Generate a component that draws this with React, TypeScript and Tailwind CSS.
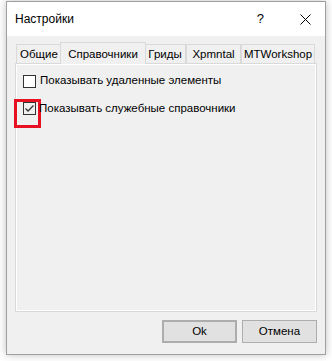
import React from "react";

const font = { fontFamily: '"Liberation Sans", Arial, sans-serif' };

function Tab({ label, active, w }: { label: string; active?: boolean; w: string }) {
  if (active) {
    return (
      <div className={`relative z-10 -mb-px -mr-[2px] -ml-[2px] flex h-[22px] items-start justify-center self-end border border-b-0 border-[#d9d9d9] bg-[#f0f0f0] pt-[3px] ${w}`}>
        <span>{label}</span>
      </div>
    );
  }
  return (
    <div className={`flex h-[19px] items-center justify-center border border-b-0 border-[#d9d9d9] bg-[#f0f0f0] pt-[1px] ${w}`}>
      <span>{label}</span>
    </div>
  );
}

export default function App() {
  return (
    <div className="h-[361px] w-[332px] bg-white text-[11.5px] text-black" style={font}>
      <div className="ml-[6px] pt-px">
        <div className="flex h-[354px] w-[320px] flex-col border border-[#a0a0a0] bg-[#f0f0f0] shadow-[0_0_8px_rgba(0,0,0,0.25)]">
          <div className="flex h-[34px] items-center bg-white">
            <span className="ml-[8px] text-[12px]">Настройки</span>
            <span className="ml-auto mr-[36px] text-[13px]">?</span>
            <svg className="mr-[14px]" width="11" height="11" viewBox="0 0 11 11">
              <path d="M0.5 0.5 L10.5 10.5 M10.5 0.5 L0.5 10.5" stroke="#000" strokeWidth="1" />
            </svg>
          </div>
          <div className="flex flex-1 flex-col px-[8px] pt-[8px]">
            <div className="flex h-[19px] items-end pl-[1px]">
              <Tab label="Общие" w="w-[46px]" />
              <Tab label="Справочники" w="w-[86px]" active />
              <Tab label="Гриды" w="w-[42px]" />
              <Tab label="Xpmntal" w="w-[55px]" />
              <Tab label="MTWorkshop" w="w-[74px]" />
            </div>
            <div className="h-[249px] border border-[#d9d9d9] bg-[#f0f0f0]">
              <div className="h-full border border-white px-[6px] pt-[9px]">
                <div className="flex h-[14px] items-center">
                  <div className="h-[13px] w-[13px] border border-[#333333] bg-white" />
                  <span className="ml-[4px]">Показывать удаленные элементы</span>
                </div>
                <div className="mt-[11px] flex items-start">
                  <div className="-ml-[9px] h-[29px] w-[27px] border-[3px] border-[#e81123] pl-[6px]">
                    <div className="flex h-[13px] w-[13px] items-center justify-center border border-[#333333] bg-[#f0f0f0]">
                      <svg width="11" height="11" viewBox="0 0 11 11">
                        <path d="M1.5 5.5 L4 8 L9.5 2.5" fill="none" stroke="#333" strokeWidth="1.3" />
                      </svg>
                    </div>
                  </div>
                  <span className="-ml-[2px] mt-[2px] leading-[14px]">Показывать служебные справочники</span>
                </div>
              </div>
            </div>
            <div className="mt-[8px] flex justify-end gap-[5px]">
              <button className="h-[23px] w-[75px] border-2 border-[#adadad] bg-[#e1e1e1] text-[11.5px]">Ok</button>
              <button className="h-[23px] w-[75px] border border-[#adadad] bg-[#e1e1e1] text-[11.5px]">Отмена</button>
            </div>
          </div>
        </div>
      </div>
    </div>
  );
}
